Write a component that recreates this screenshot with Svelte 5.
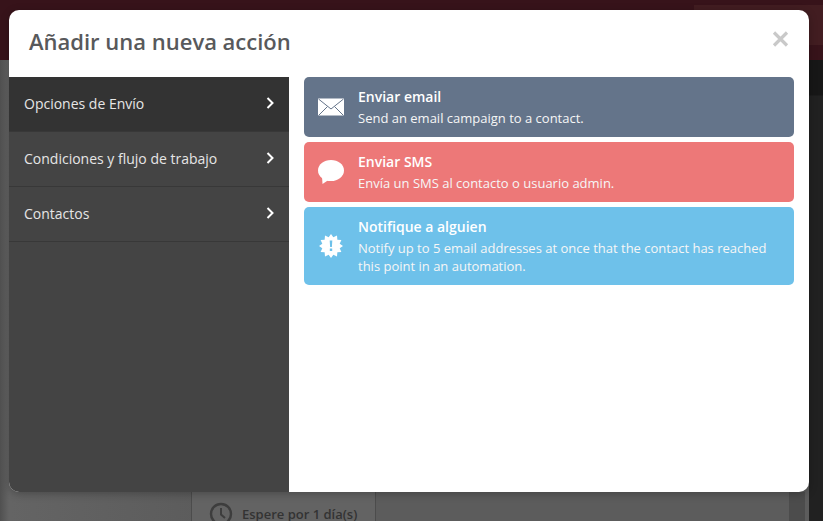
<script>
    const menu = [
        { name: 'Opciones de Envío', active: true },
        { name: 'Condiciones y flujo de trabajo', active: false },
        { name: 'Contactos', active: false }
    ];

    const actions = [
        { id: 'email', title: 'Enviar email', text: 'Send an email campaign to a contact.' },
        { id: 'sms', title: 'Enviar SMS', text: 'Envía un SMS al contacto o usuario admin.' },
        {
            id: 'notify',
            title: 'Notifique a alguien',
            text: 'Notify up to 5 email addresses at once that the contact has reached this point in an automation.'
        }
    ];

    // spiky badge behind the exclamation mark
    const badge = Array.from({ length: 24 }, (_, i) => {
        const r = i % 2 === 0 ? 12 : 9;
        const a = (i * Math.PI) / 12;
        return `${(12 + r * Math.sin(a)).toFixed(2)},${(12 - r * Math.cos(a)).toFixed(2)}`;
    }).join(' ');
</script>

<div class="page">
    <div class="topbar">
        <div class="usermenu"></div>
    </div>
    <div class="backdrop">
        <div class="main">
            <div class="column">
                <div class="wait">
                    <svg class="clock" viewBox="0 0 24 24" width="24" height="24">
                        <circle cx="12" cy="12" r="10" fill="none" stroke="#3d3d3d" stroke-width="2.4" />
                        <path d="M12 6v6.500l4 3.500" fill="none" stroke="#3d3d3d" stroke-width="2" />
                    </svg>
                    <span>Espere por 1 día(s)</span>
                </div>
            </div>
            <div class="column-end"></div>
        </div>
        <div class="strip"></div>
    </div>

    <div class="modal">
        <div class="head">
            <h2>Añadir una nueva acción</h2>
            <svg class="close" viewBox="0 0 17 16" width="17" height="16">
                <path d="M2 1.500l13 13M15 1.500l-13 13" stroke="#c9c9c9" stroke-width="3.200" fill="none" />
            </svg>
        </div>
        <div class="body">
            <nav class="side">
                {#each menu as item}
                    <div class="item" class:active={item.active}>
                        <span>{item.name}</span>
                        <svg viewBox="0 0 8 12" width="8" height="12">
                            <path d="M1.500 1l5 5-5 5" fill="none" stroke="#fff" stroke-width="2" />
                        </svg>
                    </div>
                {/each}
            </nav>
            <div class="actions">
                {#each actions as action}
                    <div class="card {action.id}">
                        <div class="icon">
                            {#if action.id === 'email'}
                                <svg viewBox="0 0 26 18" width="26" height="18">
                                    <rect x="0" y="0.5" width="26" height="17" fill="#fff" />
                                    <path d="M0.500 1L13 11 25.500 1M0.500 17.500L9.500 8.500M25.500 17.500L16.500 8.500" fill="none" stroke="#64748a" stroke-width="1" />
                                </svg>
                            {:else if action.id === 'sms'}
                                <svg viewBox="0 0 26 24" width="26" height="24">
                                    <ellipse cx="13" cy="10.500" rx="13" ry="10.500" fill="#fff" />
                                    <path d="M4 16L4.500 24 12 19z" fill="#fff" />
                                </svg>
                            {:else}
                                <svg viewBox="0 0 24 24" width="24" height="24">
                                    <polygon points={badge} fill="#fff" />
                                    <path fill="#6ec1ea" d="M10.700 6.500h2.600l-.4 6.500h-1.800zM10.800 14.500h2.400v2.600h-2.400z" />
                                </svg>
                            {/if}
                        </div>
                        <div class="copy">
                            <strong>{action.title}</strong>
                            <p>{action.text}</p>
                        </div>
                    </div>
                {/each}
            </div>
        </div>
    </div>
</div>

<style>
    :global(body) {
        margin: 0;
        font-family: "Open Sans", sans-serif;
    }

    .page {
        position: relative;
        width: 823px;
        height: 521px;
        overflow: hidden;
        display: flex;
        flex-direction: column;
    }

    .topbar {
        height: 60px;
        flex-shrink: 0;
        display: flex;
        justify-content: flex-end;
        background: #37131a;
    }

    .usermenu {
        width: 129px;
        height: 40px;
        margin-top: 5px;
        background: #421d21;
    }

    .backdrop {
        flex: 1;
        display: flex;
    }

    .main {
        flex: 1;
        display: flex;
        align-items: flex-end;
        justify-content: space-between;
        background: linear-gradient(to right, #505050 0, #646464 9px, #5c5c5c 200px);
    }

    .strip {
        width: 14px;
        background: linear-gradient(to bottom, #171717 0, #171717 35px, #212121 36px);
    }

    .column {
        width: 185px;
        height: 29px;
        margin-left: 191px;
        box-sizing: border-box;
        border-left: 1px solid #4c4c4c;
        border-right: 1px solid #4c4c4c;
        padding: 15px 0 0 17px;
        background: #636363;
    }

    .column-end {
        width: 16px;
        height: 29px;
        margin-right: 4px;
        background: #4c4c4c;
    }

    .wait {
        display: flex;
        gap: 9px;
        color: #333;
        font-size: 13px;
        font-weight: 600;
        line-height: 14px;
        white-space: nowrap;
    }

    .clock {
        flex-shrink: 0;
        margin-top: -5px;
    }

    .modal {
        position: absolute;
        left: 9px;
        top: 10px;
        width: 800px;
        height: 482px;
        background: #fff;
        border-radius: 10px;
        overflow: hidden;
        display: flex;
        flex-direction: column;
        box-shadow: 0 2px 8px rgba(0, 0, 0, 0.25);
    }

    .head {
        height: 67px;
        flex-shrink: 0;
        display: flex;
        justify-content: space-between;
        box-sizing: border-box;
        padding: 17px 20px 0;
    }

    h2 {
        margin: 0;
        font-size: 22px;
        line-height: 28px;
        font-weight: 600;
        color: #58595b;
    }

    .close {
        margin-top: 4px;
    }

    .body {
        flex: 1;
        display: flex;
        min-height: 0;
    }

    .side {
        width: 280px;
        flex-shrink: 0;
        background: #444;
    }

    .item {
        height: 55px;
        box-sizing: border-box;
        display: flex;
        align-items: center;
        justify-content: space-between;
        padding: 0 15px 2px;
        font-size: 14px;
        color: #e6e6e6;
        border-bottom: 1px solid #383838;
    }

    .item svg {
        margin-top: -1px;
    }

    .item.active {
        background: #333;
    }

    .actions {
        flex: 1;
        padding: 0 15px;
        display: flex;
        flex-direction: column;
        gap: 5px;
    }

    .card {
        display: flex;
        align-items: center;
        box-sizing: border-box;
        border-radius: 5px;
        color: #fff;
        padding: 10px 15px 10px 14px;
    }

    .email { background: #64748a; }
    .sms { background: #ed7878; }
    .notify { background: #6ec1ea; }

    .icon {
        width: 26px;
        flex-shrink: 0;
        margin-right: 14px;
        display: flex;
        justify-content: center;
    }

    .copy {
        flex: 1;
    }

    strong {
        display: block;
        font-size: 14px;
        font-weight: 600;
        line-height: 20px;
        margin-bottom: 2px;
    }

    p {
        margin: 0;
        font-size: 13px;
        line-height: 18px;
        color: #f6f6f6;
    }
</style>
